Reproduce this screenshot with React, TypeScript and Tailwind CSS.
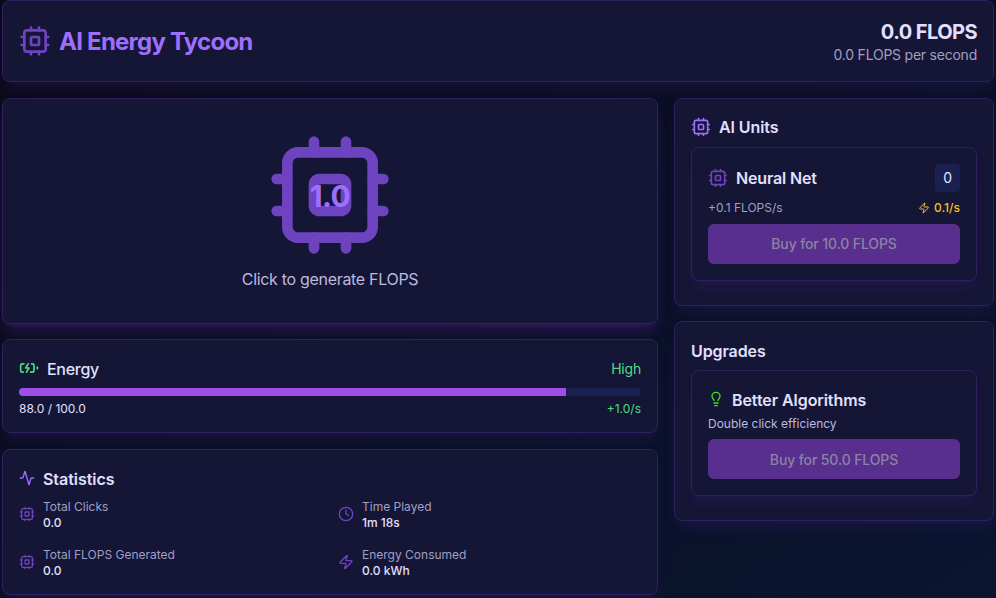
import type { ReactNode } from "react";
import { Activity, Clock, Lightbulb, Zap } from "lucide-react";

function Svg({ size, className = "", children }: { size: number; className?: string; children: ReactNode }) {
  return (
    <svg
      width={size}
      height={size}
      viewBox="0 0 24 24"
      fill="none"
      stroke="currentColor"
      strokeWidth="2"
      strokeLinecap="round"
      strokeLinejoin="round"
      className={className}
    >
      {children}
    </svg>
  );
}

// Chip with two pins on every side
function Chip({ size, className = "" }: { size: number; className?: string }) {
  return (
    <Svg size={size} className={className}>
      <rect width="16" height="16" x="4" y="4" rx="2" />
      <rect width="6" height="6" x="9" y="9" rx="1" />
      <path d="M15 2v2M15 20v2M2 15h2M2 9h2M20 15h2M20 9h2M9 2v2M9 20v2" />
    </Svg>
  );
}

function Battery({ size, className = "" }: { size: number; className?: string }) {
  return (
    <Svg size={size} className={className}>
      <path d="M15 7h1a2 2 0 0 1 2 2v6a2 2 0 0 1-2 2h-2" />
      <path d="M6 7H4a2 2 0 0 0-2 2v6a2 2 0 0 0 2 2h1" />
      <path d="m11 7-3 5h4l-3 5" />
      <path d="M22 11v2" />
    </Svg>
  );
}

const softGlow = "shadow-[0_10px_15px_-3px_rgba(124,58,237,0.1),0_4px_6px_-4px_rgba(124,58,237,0.1)]";
const strongGlow = "shadow-[0_10px_15px_-3px_rgba(147,51,234,0.2),0_4px_6px_-4px_rgba(147,51,234,0.25)]";

function Card({
  children,
  className = "",
  glow = softGlow,
}: {
  children: ReactNode;
  className?: string;
  glow?: string;
}) {
  return (
    <div className={`rounded-lg border border-[#2f2060] bg-[#151535] p-4 ${glow} ${className}`}>
      {children}
    </div>
  );
}

function Stat({ icon, label, value }: { icon: ReactNode; label: string; value: string }) {
  return (
    <div className="flex items-center gap-2 text-xs">
      <span className="text-[#6e43c0]">{icon}</span>
      <div className="translate-y-px">
        <div className="text-[#a09fc4]">{label}</div>
        <div className="font-medium">{value}</div>
      </div>
    </div>
  );
}

function BuyButton({ children }: { children: ReactNode }) {
  return (
    <button
      disabled
      className="h-10 w-full rounded-md bg-[#582f8e] text-sm font-medium tracking-[-0.12px] text-[#8b83a3]"
    >
      {children}
    </button>
  );
}

export default function App() {
  return (
    <div className="h-[598px] overflow-hidden bg-linear-to-br from-[#0a0a1a] to-[#0a1530] px-0.5 font-[Inter,sans-serif] text-[#e2e0ff]">
      <Card className="mb-4 flex items-center justify-between">
        <div className="flex items-center gap-2">
          <Chip size={32} className="text-[#6e43c0]" />
          <h1 className="translate-y-px text-2xl font-bold tracking-[-0.76px] text-[#9d6fff]">
            AI Energy Tycoon
          </h1>
        </div>
        <div className="text-right">
          <div className="translate-y-px text-xl font-bold tracking-[-0.55px]">0.0 FLOPS</div>
          <div className="text-sm tracking-[-0.23px] text-[#a09fc4]">0.0 FLOPS per second</div>
        </div>
      </Card>

      <div className="grid grid-cols-3 items-start gap-4">
        <div className="col-span-2 space-y-[15.4px]">
          <Card glow={strongGlow}>
            <div className="flex flex-col items-center py-4">
              <div className="relative mb-2">
                <Chip size={128} className="text-[#6e43c0]" />
                <span className="absolute inset-0 flex translate-y-px items-center justify-center text-3xl font-bold tracking-[-0.6px] text-[#9d6fff]">
                  1.0
                </span>
              </div>
              <div className="tracking-[-0.31px] text-[#bcbadf]">Click to generate FLOPS</div>
            </div>
          </Card>

          <Card>
            <div className="mb-2 flex items-center justify-between">
              <div className="flex items-center gap-2">
                <Battery size={20} className="text-[#4ade80]" />
                <span className="translate-y-px font-medium tracking-[-0.28px]">Energy</span>
              </div>
              <span className="translate-y-px text-sm tracking-[-0.2px] text-[#4ade80]">High</span>
            </div>
            <div className="mb-1 h-2 overflow-hidden rounded-full bg-[#1a2150]">
              <div className="h-full w-[88%] bg-[#9f4fe8]" />
            </div>
            <div className="flex translate-y-px justify-between text-xs">
              <span>88.0 / 100.0</span>
              <span className="text-[#4ade80]">+1.0/s</span>
            </div>
          </Card>

          <Card>
            <div className="mb-2 flex items-center gap-2">
              <Activity size={16} className="text-[#9d6fff]" />
              <h2 className="translate-y-px font-semibold tracking-[-0.05px]">Statistics</h2>
            </div>
            <div className="grid grid-cols-2 gap-4">
              <Stat icon={<Chip size={16} />} label="Total Clicks" value="0.0" />
              <Stat icon={<Clock size={16} />} label="Time Played" value="1m 18s" />
              <Stat icon={<Chip size={16} />} label="Total FLOPS Generated" value="0.0" />
              <Stat icon={<Zap size={16} />} label="Energy Consumed" value="0.0 kWh" />
            </div>
          </Card>
        </div>

        <div className="space-y-[15.4px]">
          <Card>
            <div className="mb-2 flex items-center gap-2">
              <Chip size={20} className="text-[#9d6fff]" />
              <h2 className="font-semibold tracking-[-0.1px]">AI Units</h2>
            </div>
            <Card className="mb-2">
              <div className="mb-2 flex items-center justify-between">
                <div className="flex items-center gap-2">
                  <Chip size={20} className="text-[#6e43c0]" />
                  <h3 className="font-semibold tracking-[-0.15px]">Neural Net</h3>
                </div>
                <span className="rounded bg-[#1a2150] px-2 py-1 text-sm">0</span>
              </div>
              <div className="mb-2 flex items-center justify-between text-xs">
                <span className="text-[#a09fc4]">+0.1 FLOPS/s</span>
                <span className="flex items-center gap-1 font-medium text-[#fbbf24]">
                  <Zap size={12} />
                  0.1/s
                </span>
              </div>
              <BuyButton>Buy for 10.0 FLOPS</BuyButton>
            </Card>
          </Card>

          <Card>
            <h2 className="mb-2 translate-y-px font-semibold tracking-[-0.1px]">Upgrades</h2>
            <Card className="mb-2">
              <div className="mb-1 flex items-center gap-2">
                <Lightbulb size={16} className="text-[#39e617]" />
                <h3 className="translate-y-px font-semibold tracking-[-0.07px]">Better Algorithms</h3>
              </div>
              <p className="mb-2 translate-y-px text-xs text-[#bcbadf]">Double click efficiency</p>
              <BuyButton>
                <span className="block translate-y-px">Buy for 50.0 FLOPS</span>
              </BuyButton>
            </Card>
          </Card>
        </div>
      </div>
    </div>
  );
}
